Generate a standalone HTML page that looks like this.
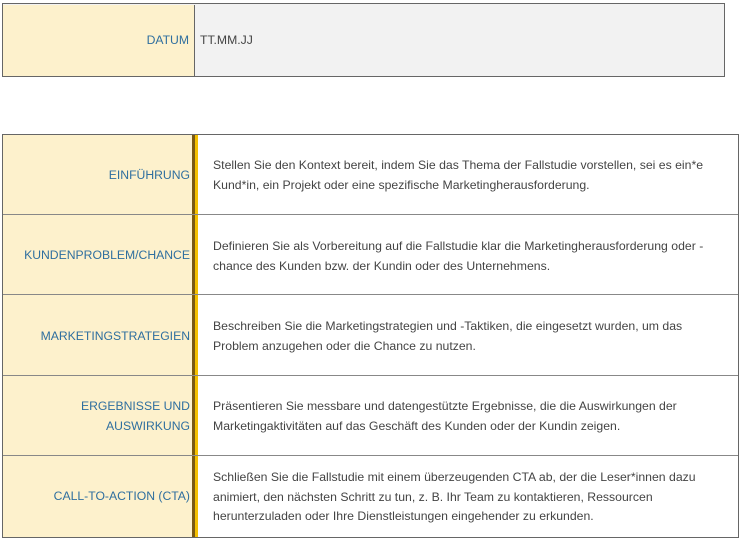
<!DOCTYPE html>
<html><head><style>
body{margin:0;width:740px;height:540px;background:#fff;font-family:"Liberation Sans",sans-serif;font-size:12px;position:relative;overflow:hidden}
.box{position:absolute;box-sizing:border-box}
.lab{color:#2f6f9f;text-align:right;background:#fdf1cc;font-size:12.2px}
.txt{color:#444;line-height:19.5px;font-size:12.25px}
</style></head><body>
<div class="box" style="left:2px;top:3px;width:723px;height:74px;border:1px solid #666;background:#f2f2f2"></div>
<div class="box lab" style="left:3px;top:5px;width:192px;height:71px;border-right:1px solid #666;padding-right:5px;line-height:71px">DATUM</div>
<div class="box" style="left:200px;top:5px;line-height:71px;color:#444;font-size:12.2px">TT.MM.JJ</div>

<div class="box" style="left:2px;top:134px;width:737px;height:404px;border:1px solid #666"></div>
<div class="box" style="left:3px;top:135px;width:189px;height:402px;background:#fdf1cc"></div>
<div class="box" style="left:192px;top:135px;width:3px;height:402px;background:#7a5a14"></div>
<div class="box" style="left:195px;top:135px;width:3px;height:402px;background:#f5c000"></div>

<div class="box" style="left:3px;top:214px;width:735px;height:1px;background:#888"></div>
<div class="box" style="left:3px;top:294px;width:735px;height:1px;background:#888"></div>
<div class="box" style="left:3px;top:375px;width:735px;height:1px;background:#888"></div>
<div class="box" style="left:3px;top:455px;width:735px;height:1px;background:#888"></div>

<div class="box lab" style="left:3px;top:166px;width:187px;background:none;line-height:19.5px">EINFÜHRUNG</div>
<div class="box lab" style="left:3px;top:246px;width:187px;background:none;line-height:19.5px">KUNDENPROBLEM/CHANCE</div>
<div class="box lab" style="left:3px;top:327px;width:187px;background:none;line-height:19.5px">MARKETINGSTRATEGIEN</div>
<div class="box lab" style="left:3px;top:397px;width:187px;background:none;line-height:19.5px">ERGEBNISSE UND<br>AUSWIRKUNG</div>
<div class="box lab" style="left:3px;top:487px;width:187px;background:none;line-height:19.5px">CALL-TO-ACTION (CTA)</div>

<div class="box txt" style="left:213px;top:156px;width:505px">Stellen Sie den Kontext bereit, indem Sie das Thema der Fallstudie vorstellen, sei es ein*e Kund*in, ein Projekt oder eine spezifische Marketingherausforderung.</div>
<div class="box txt" style="left:213px;top:237px;width:505px">Definieren Sie als Vorbereitung auf die Fallstudie klar die Marketingherausforderung oder -chance des Kunden bzw. der Kundin oder des Unternehmens.</div>
<div class="box txt" style="left:213px;top:317px;width:505px">Beschreiben Sie die Marketingstrategien und -Taktiken, die eingesetzt wurden, um das Problem anzugehen oder die Chance zu nutzen.</div>
<div class="box txt" style="left:213px;top:397px;width:505px">Präsentieren Sie messbare und datengestützte Ergebnisse, die die Auswirkungen der Marketingaktivitäten auf das Geschäft des Kunden oder der Kundin zeigen.</div>
<div class="box txt" style="left:213px;top:468px;width:505px">Schließen Sie die Fallstudie mit einem überzeugenden CTA ab, der die Leser*innen dazu animiert, den nächsten Schritt zu tun, z. B. Ihr Team zu kontaktieren, Ressourcen herunterzuladen oder Ihre Dienstleistungen eingehender zu erkunden.</div>
</body></html>
